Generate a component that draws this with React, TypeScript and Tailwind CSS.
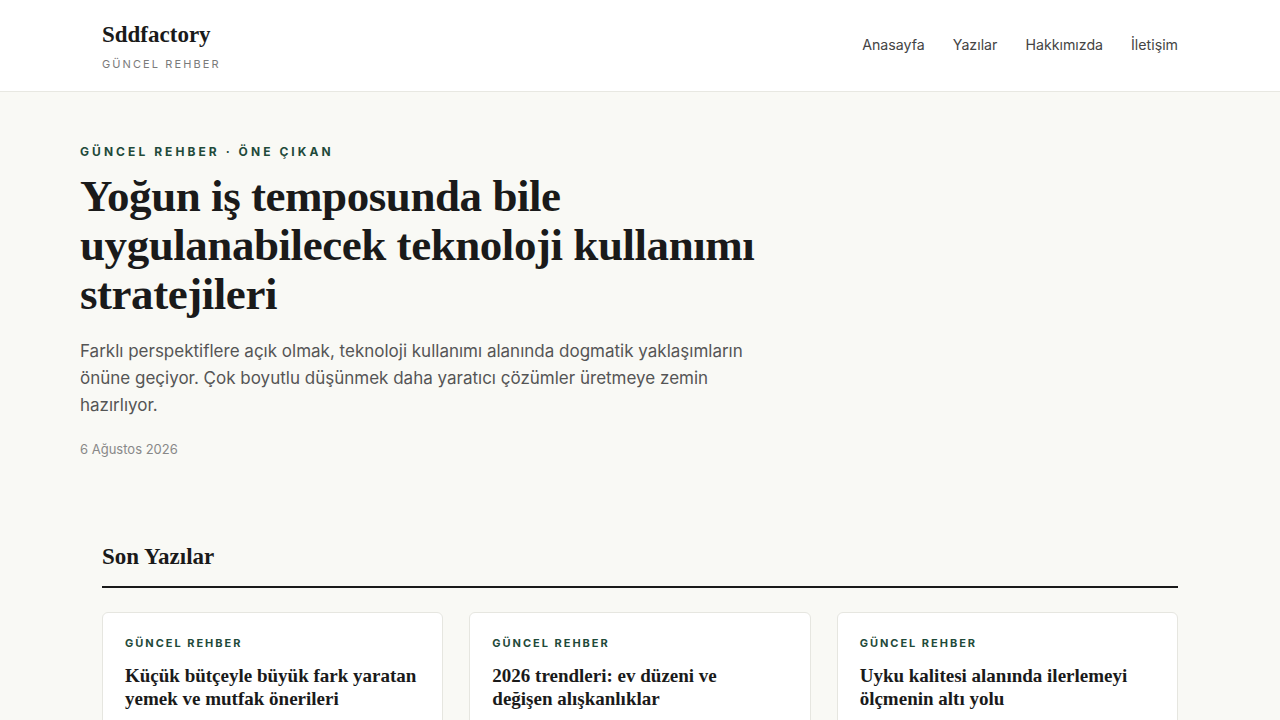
import React from "react";

const serif = { fontFamily: '"Liberation Serif", "DejaVu Serif", serif' };

export default function App() {
  const cards = [
    ["Küçük bütçeyle büyük fark yaratan", "yemek ve mutfak önerileri"],
    ["2026 trendleri: ev düzeni ve", "değişen alışkanlıklar"],
    ["Uyku kalitesi alanında ilerlemeyi", "ölçmenin altı yolu"],
  ];
  return (
    <div className="min-h-screen bg-[#f9f9f5] text-[#1a1a1a]" style={{ fontFamily: 'Inter, "Noto Sans", sans-serif' }}>
      <header className="bg-white border-b border-[#e8e8e2]">
        <div className="max-w-[1076px] mx-auto h-[91px] flex items-center justify-between">
          <div className="flex flex-col">
            <div className="text-[23px] font-bold leading-[28px] text-[#1a1a1a]" style={serif}>Sddfactory</div>
            <div className="text-[11px] tracking-[0.19em] text-[#7a7a7a] mt-[8px] leading-[14px]">GÜNCEL REHBER</div>
          </div>
          <nav className="flex items-center gap-7 text-[14.2px] text-[#444] -mt-[2px]">
            <a>Anasayfa</a>
            <a>Yazılar</a>
            <a>Hakkımızda</a>
            <a>İletişim</a>
          </nav>
        </div>
      </header>

      <section className="max-w-[1120px] mx-auto pt-[52px] pb-[86px]">
        <div className="max-w-[720px]">
          <div className="text-[12px] font-bold tracking-[0.255em] text-[#1f4a3a] leading-[16px]">GÜNCEL REHBER · ÖNE ÇIKAN</div>
          <h1 className="mt-[12px] text-[45px] font-bold leading-[49px] text-[#1a1a1a] tracking-[-0.01em]" style={serif}>
            Yoğun iş temposunda bile<br />uygulanabilecek teknoloji kullanımı<br />stratejileri
          </h1>
          <p className="mt-[19px] text-[17px] leading-[27px] text-[#555] max-w-[700px]">
            Farklı perspektiflere açık olmak, teknoloji kullanımı alanında dogmatik yaklaşımların önüne geçiyor. Çok boyutlu düşünmek daha yaratıcı çözümler üretmeye zemin hazırlıyor.
          </p>
          <div className="mt-[22px] text-[13px] text-[#888] leading-[16px]">6 Ağustos 2026</div>
        </div>
      </section>

      <section className="max-w-[1076px] mx-auto">
        <h2 className="text-[23px] font-bold leading-[28px] pb-[15px] border-b-2 border-[#1a1a1a]" style={serif}>Son Yazılar</h2>
        <div className="grid grid-cols-3 gap-[26px] mt-[24px]">
          {cards.map((c, i) => (
            <div key={i} className="bg-white border border-[#e6e6e0] rounded-[6px] px-[22px] pt-[23px] pb-[24px] h-[140px]">
              <div className="text-[11px] font-bold tracking-[0.18em] text-[#1f4a3a] leading-[14px]">GÜNCEL REHBER</div>
              <h3 className="mt-[14px] text-[19px] font-bold leading-[23px] text-[#1a1a1a]" style={serif}>
                {c[0]}<br />{c[1]}
              </h3>
            </div>
          ))}
        </div>
      </section>
    </div>
  );
}
